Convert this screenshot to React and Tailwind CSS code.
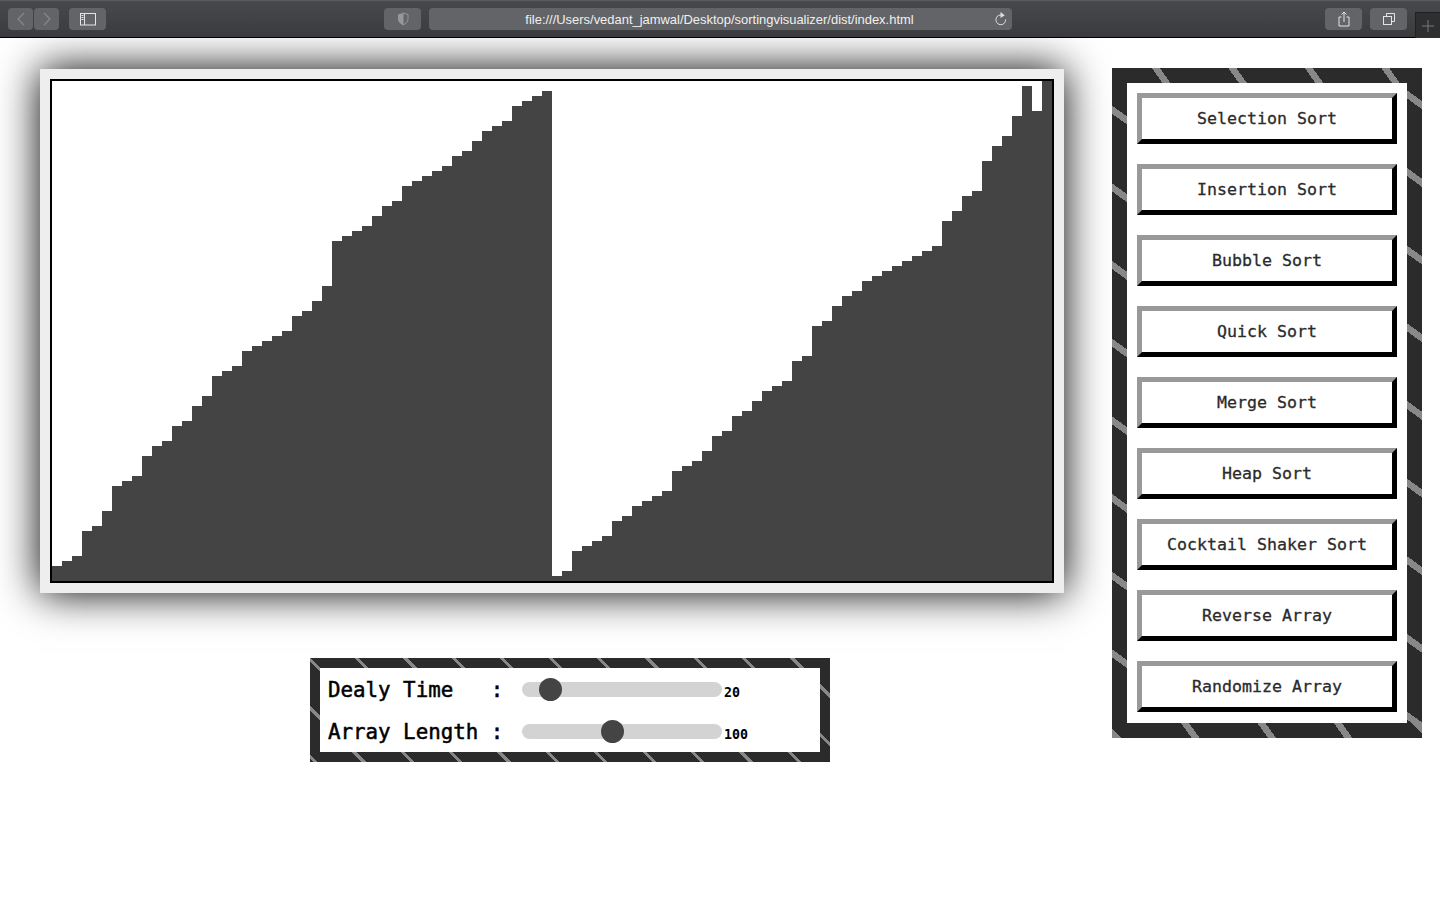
import React from 'react';

const bars = [
  3, 4, 5, 10, 11, 14, 19, 20, 21, 25, 27, 28, 31, 32, 35, 37, 41, 42, 43, 46,
  47, 48, 49, 50, 53, 54, 56, 59, 68, 69, 70, 71, 73, 75, 76, 79, 80, 81, 82, 83,
  85, 86, 88, 90, 91, 92, 95, 96, 97, 98, 1, 2, 6, 7, 8, 9, 12, 13, 15, 16,
  17, 18, 22, 23, 24, 26, 29, 30, 33, 34, 36, 38, 39, 40, 44, 45, 51, 52, 55, 57,
  58, 60, 61, 62, 63, 64, 65, 66, 67, 72, 74, 77, 78, 84, 87, 89, 93, 99, 94, 100,
];

const sorts = [
  'Selection Sort',
  'Insertion Sort',
  'Bubble Sort',
  'Quick Sort',
  'Merge Sort',
  'Heap Sort',
  'Cocktail Shaker Sort',
  'Reverse Array',
  'Randomize Array',
];

const toolBtn = 'h-[22px] flex items-center justify-center rounded-[4px] bg-[#636467]';

function Toolbar() {
  return (
    <div className="h-[38px] flex items-start pt-[8px] pl-[8px] border-t border-t-[#5b5c5e] border-b border-b-black bg-gradient-to-b from-[#48494c] to-[#3a3b3d] relative font-['Liberation_Sans',sans-serif]">
      <div className={`${toolBtn} w-[25px] -mt-px`}>
        <svg width="10" height="14" viewBox="0 0 10 14" fill="none" stroke="#88898b" strokeWidth="1.2"><path d="M8 1L2 7l6 6" /></svg>
      </div>
      <div className={`${toolBtn} w-[25px] ml-px -mt-px`}>
        <svg width="10" height="14" viewBox="0 0 10 14" fill="none" stroke="#88898b" strokeWidth="1.2"><path d="M2 1l6 6-6 6" /></svg>
      </div>
      <div className={`${toolBtn} w-[37px] ml-[10px] -mt-px`}>
        <svg width="16" height="13" viewBox="0 0 16 13" fill="none" stroke="#e4e4e5" strokeWidth="1">
          <rect x="0.500" y="0.500" width="15" height="11.500" />
          <path d="M4.500 0.500V12M1.500 2.500h2M1.500 4.500h2M1.500 6.500h2" />
        </svg>
      </div>
      <div className={`${toolBtn} w-[37px] ml-[278px] -mt-px`}>
        <svg width="12" height="14" viewBox="0 0 12 14">
          <path d="M6 1L1 2.500v4.200C1 10 3.500 12 6 13z" fill="#96979a" />
          <path d="M6 1l5 1.500v4.200C11 10 8.500 12 6 13z" fill="none" stroke="#96979a" />
        </svg>
      </div>
      <div className={`${toolBtn} w-[583px] ml-[8px] -mt-px relative text-[12.95px] text-[#f0f0f0]`}>
        <span className="-ml-[2px] pt-px">file:///Users/vedant_jamwal/Desktop/sortingvisualizer/dist/index.html</span>
        <svg className="absolute right-[5px] top-[3px]" width="13" height="15" viewBox="0 0 13 15" fill="none" stroke="#dddddf" strokeWidth="1">
          <path d="M9.300 4.600a4.900 4.900 0 1 0 2.400 3.900" />
          <path d="M6.500 1L10.800 4.300 6.500 7z" fill="#dddddf" stroke="none" />
        </svg>
      </div>
      <div className={`${toolBtn} w-[37px] ml-[313px] -mt-px`}>
        <svg width="14" height="16" viewBox="0 0 14 16" fill="none" stroke="#e4e4e5" strokeWidth="1">
          <path d="M4.500 6H2v9h10V6H9.500M7 11V1M4.500 3.500L7 1l2.500 2.500" />
        </svg>
      </div>
      <div className={`${toolBtn} w-[37px] ml-[8px] -mt-px`}>
        <svg width="14" height="14" viewBox="0 0 14 14" fill="none" stroke="#e4e4e5" strokeWidth="1">
          <rect x="1.500" y="4.500" width="8" height="8" />
          <path d="M4.500 4.500v-3h8v8h-3" />
        </svg>
      </div>
      <div className="absolute right-0 top-[11px] w-[25px] h-[26px] bg-[#2e2f31] border-l border-t border-[#1f2022] flex items-center justify-center">
        <svg width="12" height="12" viewBox="0 0 12 12" stroke="#77787a" strokeWidth="1"><path d="M6 0v12M0 6h12" /></svg>
      </div>
    </div>
  );
}

function Slider({ label, value, number }) {
  return (
    <div className="h-[42px] flex items-center">
      <span className="w-[194px] mt-[2px] whitespace-pre text-[20.8px] text-black leading-none [-webkit-text-stroke:0.5px_#000]">{label}</span>
      <input
        type="range"
        min="0"
        max="1000"
        defaultValue={value}
        className="appearance-none w-[200px] h-[15px] rounded-[8px] bg-[#d3d3d3] outline-none [&::-webkit-slider-thumb]:appearance-none [&::-webkit-slider-thumb]:w-[23px] [&::-webkit-slider-thumb]:h-[23px] [&::-webkit-slider-thumb]:rounded-full [&::-webkit-slider-thumb]:bg-[#444]"
      />
      <span className="ml-[2px] mt-[7px] text-[13.3px] font-bold text-black leading-none">{number}</span>
    </div>
  );
}

export default function App() {
  return (
    <div className="min-h-[900px] bg-white font-['DejaVu_Sans_Mono',monospace]">
      <Toolbar />
      <div className="flex items-start">
        {/* Visualizer + sliders */}
        <div className="ml-[40px] mt-[31px]">
          <div className="w-[1024px] h-[524px] p-[10px] bg-[#eee] shadow-[0_0_40px_#000]">
            <div className="w-[1004px] h-[504px] border-2 border-black bg-white flex items-end">
              {bars.map((b, i) => (
                <div key={i} className="w-[10px] bg-[#444]" style={{ height: b * 5 }} />
              ))}
            </div>
          </div>
          <div className="ml-[270px] mt-[65px] w-[520px] h-[104px] border-[10px] border-solid [border-image:repeating-linear-gradient(45deg,#2b2b2b,#2b2b2b_2.5px,#888_2.5px,#888_5.5px,#2b2b2b_5.5px,#2b2b2b_34.2px)_10] bg-white pl-[8px]">
            <Slider label="Dealy Time   :" value={98} number="20" />
            <Slider label="Array Length :" value={446} number="100" />
          </div>
        </div>

        {/* Algorithm buttons */}
        <div className="ml-[48px] mt-[30px] w-[310px] h-[670px] border-[15px] border-solid [border-image:repeating-linear-gradient(45deg,#888,#888_5px,#2b2b2b_5px,#2b2b2b_54.8px,#888_54.8px,#888_55.6px)_11] bg-white pt-[10px] pl-[10px] flex flex-col gap-[20px]">
          {sorts.map((s) => (
            <button
              key={s}
              className="w-[260px] h-[51px] pt-[2px] border-[5px] border-solid border-t-[#999] border-l-[#999] border-b-black border-r-black bg-white text-[16.6px] text-[#2b2b2b] [-webkit-text-stroke:0.3px_#2b2b2b]"
            >
              {s}
            </button>
          ))}
        </div>
      </div>
    </div>
  );
}
